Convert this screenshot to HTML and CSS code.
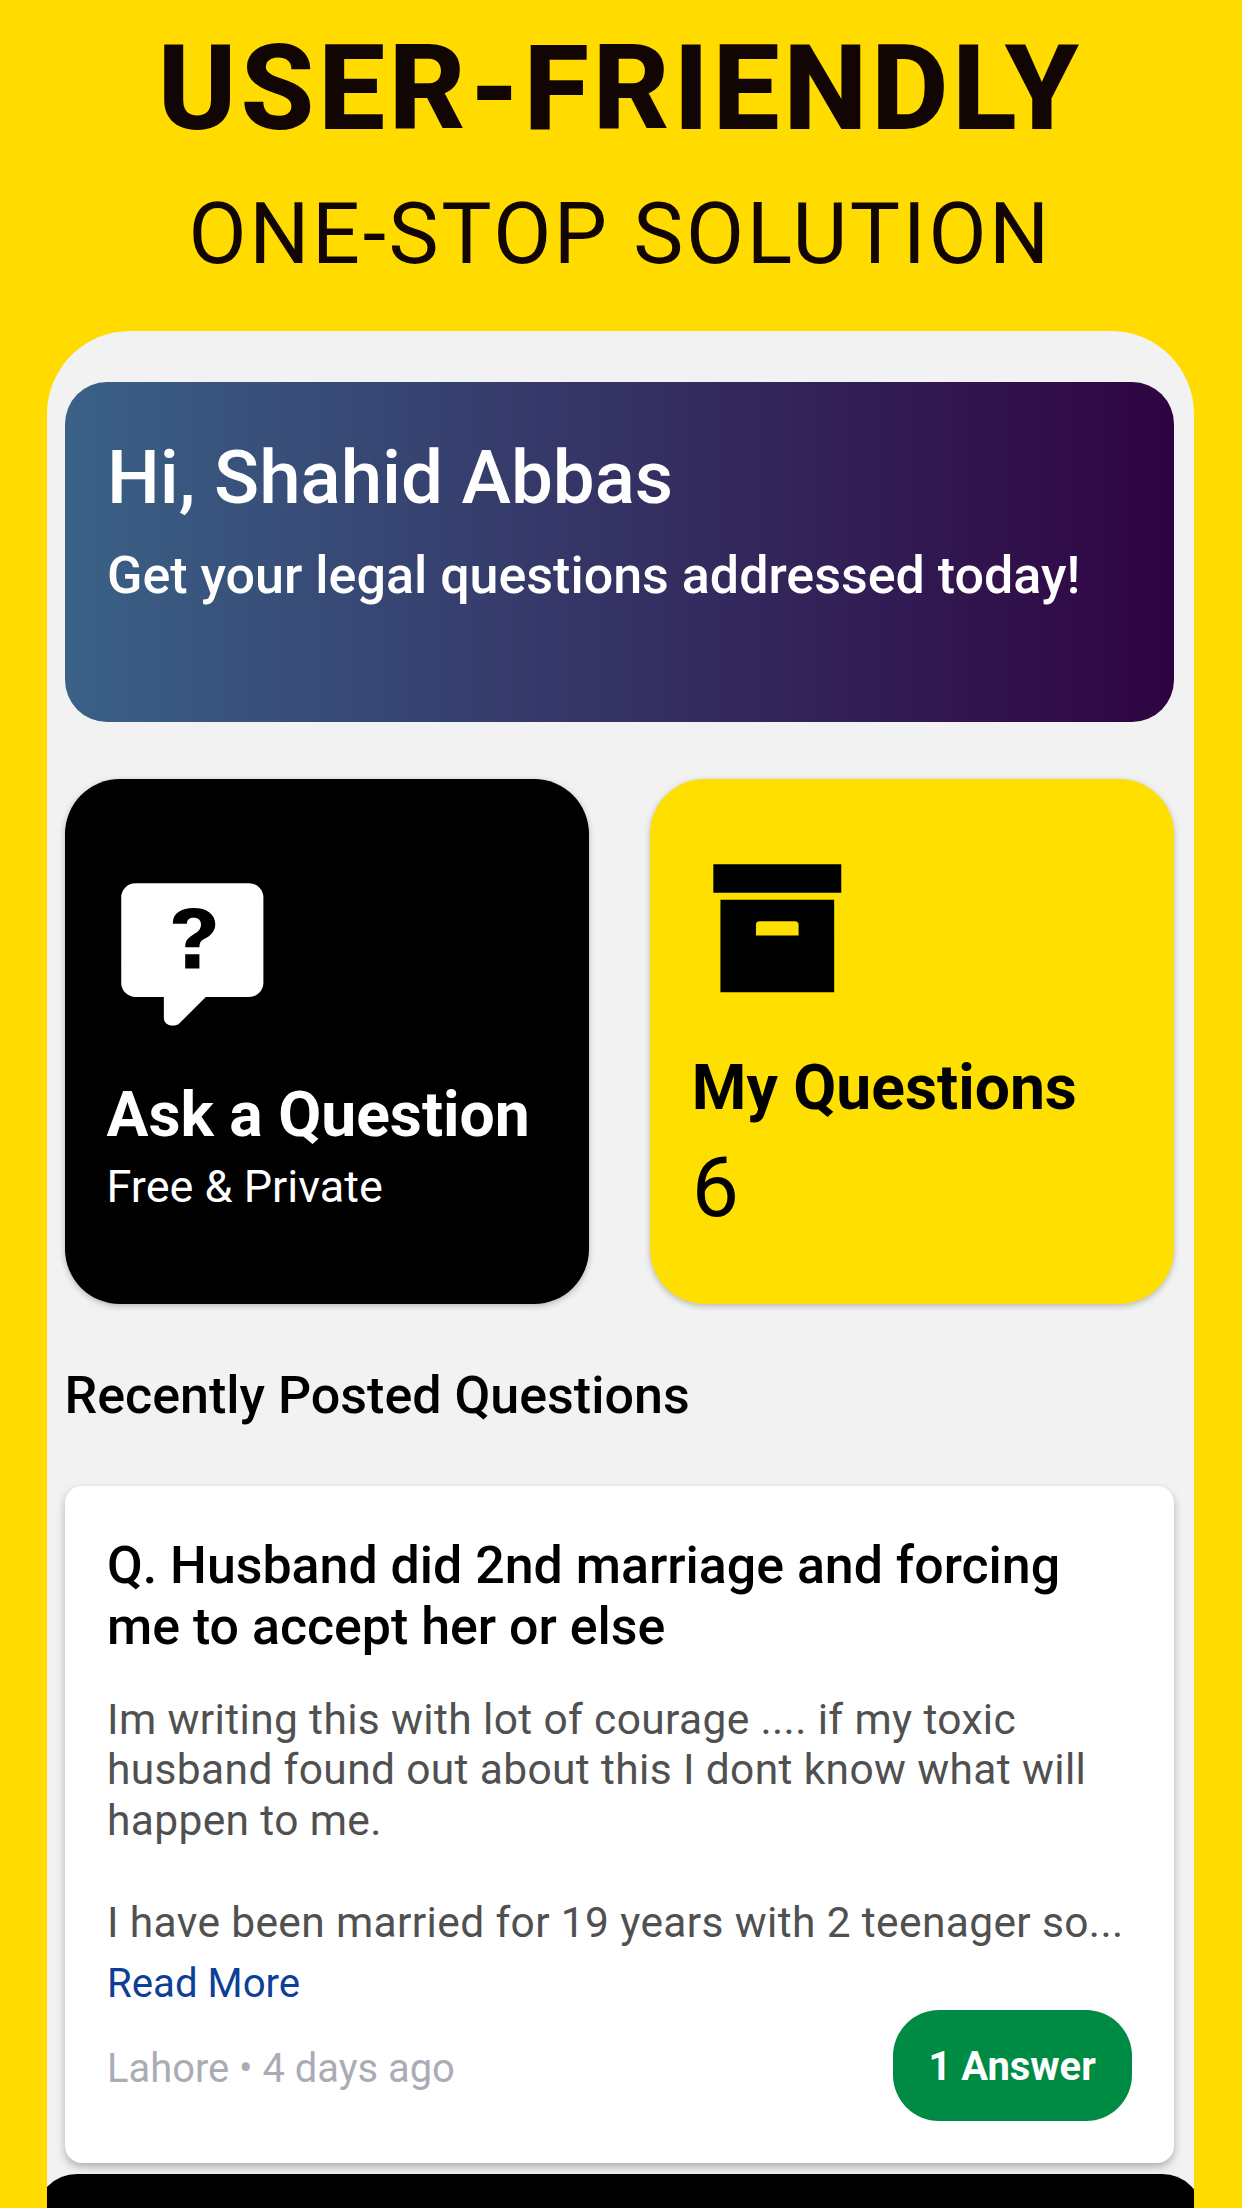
FILE: index.html
```
<!DOCTYPE html>
<html lang="en">
<head>
    <meta charset="UTF-8">
    <meta name="viewport" content="width=device-width, initial-scale=1.0">
    <title>User-Friendly One-Stop Solution</title>
    <link rel="stylesheet" href="styles.css">
</head>
<body>
    <div class="promo">
        <h1 class="promo-title">USER-FRIENDLY</h1>
        <p class="promo-subtitle">ONE-STOP SOLUTION</p>
    </div>

    <div class="screen">
        <div class="banner">
            <h2>Hi, Shahid Abbas</h2>
            <p>Get your legal questions addressed today!</p>
        </div>

        <div class="tiles">
            <div class="tile tile-ask">
                <svg class="tile-icon" viewBox="0 0 24 24" fill="currentColor">
                    <path d="M4,2A2,2 0 0,0 2,4V16A2,2 0 0,0 4,18H8V21A1,1 0 0,0 9,22H9.5C9.75,22 10,21.9 10.2,21.71L13.9,18H20A2,2 0 0,0 22,16V4A2,2 0 0,0 20,2H4M12.19,5.5C13.13,5.5 13.88,5.71 14.42,6.12C14.96,6.54 15.23,7.1 15.23,7.8C15.23,8.24 15.08,8.63 14.79,9C14.5,9.36 14.12,9.64 13.66,9.85C13.4,10 13.23,10.15 13.14,10.32C13.05,10.5 13,10.72 13,11H11C11,10.5 11.1,10.16 11.29,9.92C11.5,9.68 11.84,9.4 12.36,9.08C12.62,8.94 12.83,8.76 13,8.54C13.14,8.33 13.22,8.08 13.22,7.8C13.22,7.5 13.13,7.28 12.95,7.11C12.77,6.93 12.5,6.85 12.19,6.85C11.92,6.85 11.7,6.92 11.5,7.06C11.34,7.2 11.24,7.41 11.24,7.69H9.27C9.22,7 9.5,6.4 10.05,6.04C10.59,5.68 11.3,5.5 12.19,5.5M11,12H13V14H11V12Z" fill-rule="evenodd"/>
                </svg>
                <h3>Ask a Question</h3>
                <p>Free &amp; Private</p>
            </div>
            <div class="tile tile-my">
                <svg class="tile-icon" viewBox="0 0 24 24" fill="currentColor">
                    <path d="M3,3H21V7H3V3M4,8H20V21H4V8M9.5,11A0.5,0.5 0 0,0 9,11.5V13H15V11.5A0.5,0.5 0 0,0 14.5,11H9.5Z" fill-rule="evenodd"/>
                </svg>
                <h3>My Questions</h3>
                <p class="count">6</p>
            </div>
        </div>

        <h2 class="section-title">Recently Posted Questions</h2>

        <div class="question">
            <h3>Q. Husband did 2nd marriage and forcing me to accept her or else</h3>
            <div class="question-text">Im writing this with lot of courage .... if my toxic<br>husband found out about this I dont know what will<br>happen to me.<br><br>I have been married for 19 years with 2 teenager so...</div>
            <a class="read-more">Read More</a>
            <div class="question-footer">
                <span class="meta">Lahore • 4 days ago</span>
                <span class="answers">1 Answer</span>
            </div>
        </div>

        <!-- top edge of the bottom navigation -->
        <div class="bottom-bar"></div>
    </div>
</body>
</html>
```
FILE: styles.css
```
* {
    box-sizing: border-box;
}
body {
    margin: 0;
    height: 2208px;
    overflow: hidden;
    display: flex;
    flex-direction: column;
    background-color: #ffdb00;
    font-family: Roboto, sans-serif;
    color: #000;
}
h1, h2, h3, p {
    margin: 0;
}

/* headline */
.promo {
    padding: 28.6px 1.5px 0 0;
    text-align: center;
    color: #120605;
}
.promo-title {
    font-size: 119px;
    line-height: 120px;
    font-weight: 800;
    letter-spacing: 3.88px;
}
.promo-subtitle {
    margin-top: 36px;
    font-size: 84.4px;
    line-height: 100px;
    letter-spacing: 2.62px;
}

/* phone screen */
.screen {
    flex: 1;
    margin: 46.4px 48px 0 47px;
    padding: 51px 20px 0 17.5px;
    background-color: #f2f2f2;
    border-radius: 83px 83px 0 0;
    overflow: hidden;
}
.banner {
    height: 340px;
    padding: 51.7px 42.5px 0;
    border-radius: 42px;
    background: linear-gradient(to right, #3a6186, #2f0342);
    color: #fff;
}
.banner h2 {
    font-size: 74.5px;
    line-height: 88px;
    font-weight: 500;
}
.banner p {
    margin-top: 24.8px;
    font-size: 52px;
    line-height: 60px;
    font-weight: 500;
}

.tiles {
    display: flex;
    justify-content: space-between;
    margin-top: 57.3px;
}
.tile {
    width: 524.2px;
    height: 524.3px;
    padding: 90px 42px 0;
    border-radius: 55px;
    box-shadow: 0 2px 6px rgba(0, 0, 0, 0.25);
}
.tile-ask {
    background-color: #000;
    color: #fff;
}
.tile-my {
    padding-top: 63.4px;
    background-color: #ffdf00;
}
.tile-icon {
    display: block;
    width: 170.6px;
    height: 170.6px;
}
.tile h3 {
    margin-top: 38px;
    font-size: 62.4px;
    line-height: 74px;
    font-weight: 700;
}
.tile p {
    margin-top: 9.3px;
    font-size: 45px;
    line-height: 52px;
}
.tile .count {
    margin-top: 13.7px;
    font-size: 84px;
    line-height: 98px;
}

.section-title {
    margin-top: 62.2px;
    font-size: 52px;
    line-height: 60px;
    font-weight: 500;
}

.question {
    height: 677.4px;
    margin-top: 59.8px;
    padding: 49px 42.5px 0;
    background-color: #fff;
    border-radius: 17px;
    box-shadow: 0 4px 8px rgba(0, 0, 0, 0.28);
}
.question h3 {
    font-size: 51.9px;
    line-height: 61.3px;
    font-weight: 500;
}
.question-text {
    margin-top: 37.6px;
    font-size: 42.5px;
    line-height: 50.7px;
    letter-spacing: 0.36px;
    white-space: nowrap;
    color: #505050;
}
.read-more {
    display: block;
    margin-top: 10.4px;
    font-size: 40.2px;
    line-height: 50px;
    color: #0d3f99;
}
.question-footer {
    display: flex;
    justify-content: space-between;
    align-items: center;
    margin-top: 1.4px;
}
.meta {
    padding-top: 5px;
    font-size: 39.9px;
    color: #a9acb5;
}
.answers {
    width: 238.8px;
    padding-top: 3px;
    line-height: 108.3px;
    border-radius: 46px;
    background-color: #008b45;
    color: #fff;
    font-size: 39.9px;
    font-weight: 700;
    text-align: center;
}

.bottom-bar {
    height: 80px;
    margin: 10.8px -28.5px 0;
    background-color: #000;
    border-radius: 41px 41px 0 0;
}
```
